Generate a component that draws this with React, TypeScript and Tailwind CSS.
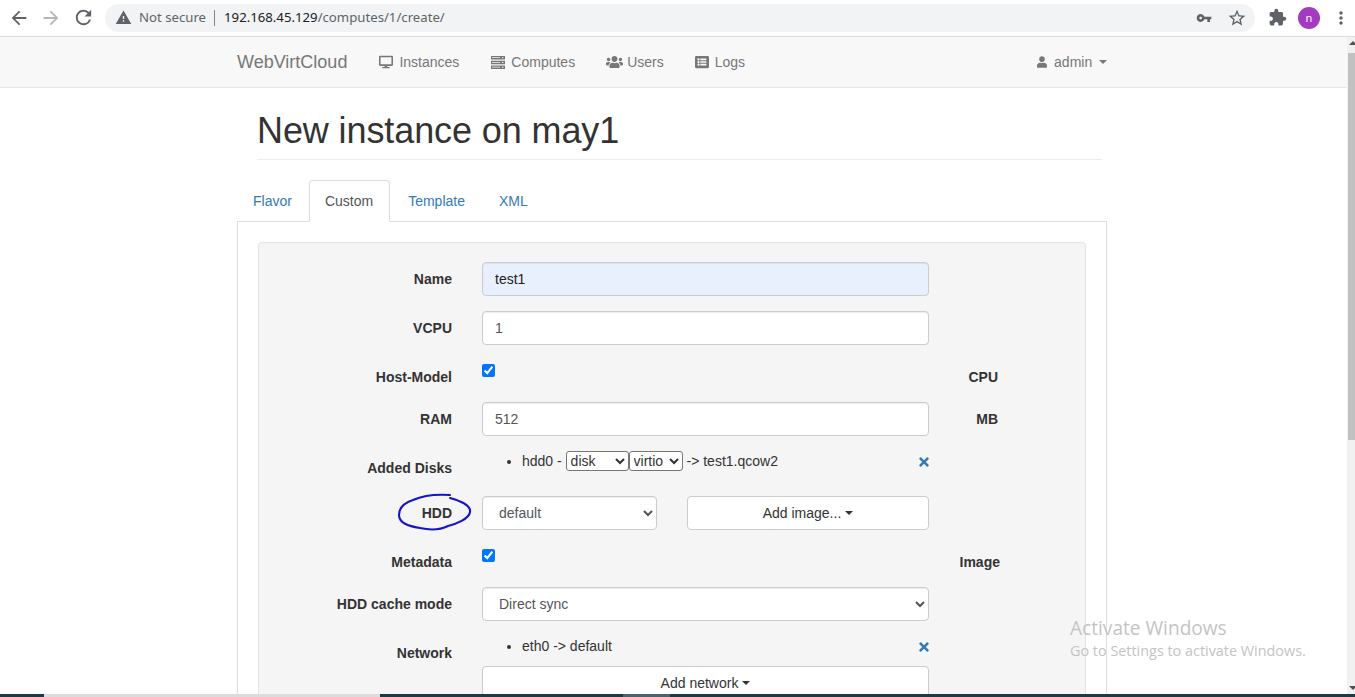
import React from "react";
import { MdArrowBack, MdArrowForward, MdRefresh, MdWarning, MdVpnKey, MdStarBorder, MdExtension, MdMoreVert } from "react-icons/md";
import { FaDesktop, FaUsers, FaUser, FaListAlt, FaTimes } from "react-icons/fa";

const Caret = ({ className = "" }: { className?: string }) => (
  <span className={`inline-block w-0 h-0 border-x-[4px] border-x-transparent border-t-[4px] border-t-current align-middle ${className}`} />
);

const Row = ({ label, unit, unitCls = "w-[69px]", children, className = "mb-[15px]" }: { label: string; unit?: string; unitCls?: string; children: React.ReactNode; className?: string }) => (
  <div className={`flex ${className}`}>
    <label className="w-[193px] shrink-0 pt-[7px] text-right font-bold text-[#333] leading-5">{label}</label>
    <div className="ml-[30px] w-[447px] shrink-0">{children}</div>
    {unit && <label className={`${unitCls} shrink-0 pt-[7px] text-right font-bold text-[#333] leading-5`}>{unit}</label>}
  </div>
);

const inputCls = "block w-full h-[34px] rounded border border-[#ccc] px-3 text-sm text-[#555] shadow-[inset_0_1px_1px_rgba(0,0,0,0.075)] outline-none";
const selectCls = "block h-[34px] rounded border border-[#ccc] bg-white px-3 text-sm text-[#555] shadow-[inset_0_1px_1px_rgba(0,0,0,0.075)]";
const btnCls = "flex items-center justify-center h-[34px] rounded border border-[#ccc] bg-white text-sm text-[#333]";

const Check = () => (
  <input type="checkbox" defaultChecked className="block w-[13px] h-[13px] mt-1 m-0 accent-[#0075ff]" />
);

const ComputesIcon = () => (
  <svg className="w-[14px] h-[13px] mr-[6px]" viewBox="0 0 14 13" fill="#777">
    <path d="M0 0h14v3.4H0zM0 4.8h14v3.4H0zM0 9.6h14V13H0z" />
    <path d="M1 1.2h8v.8H1zM1 6h8v.8H1zM1 10.8h8v.8H1zM11 1.2h1.4v1H11zM11 6h1.4v1H11zM11 10.8h1.4v1H11z" fill="#f8f8f8" />
  </svg>
);

export default function App() {
  return (
    <div className="relative flex flex-col h-[697px] w-[1355px] overflow-hidden bg-white text-sm font-['Liberation_Sans',Arial,sans-serif]">
      {/* Browser toolbar */}
      <div className="flex items-center h-[37px] shrink-0 border-b border-[#dcdcdc] bg-white pb-px">
        <div className="flex items-center w-[105px] pl-[8px] text-[#5f6368]">
          <MdArrowBack className="w-[22px] h-[22px]" />
          <MdArrowForward className="ml-[10px] w-[22px] h-[22px] text-[#b4b6b9]" />
          <MdRefresh className="ml-[10px] w-[23px] h-[23px]" />
        </div>
        <div className="flex items-center w-[1150px] h-[28px] rounded-full bg-[#f1f3f4] pl-[10px] font-['Noto_Sans',sans-serif] text-[13.2px]">
          <MdWarning className="w-[17px] h-[17px] text-[#5f6368]" />
          <span className="ml-[7px] text-[#5f6368]">Not secure</span>
          <span className="ml-[8px] w-px h-[16px] bg-[#80868b]" />
          <span className="ml-[9px] text-[#202124]">192.168.45.129<span className="text-[#5f6368]">/computes/1/create/</span></span>
          <MdVpnKey className="ml-auto w-[16px] h-[16px] text-[#5f6368]" />
          <MdStarBorder className="ml-[15px] mr-[8px] w-[20px] h-[20px] text-[#5f6368]" />
        </div>
        <MdExtension className="ml-[13px] w-[19px] h-[19px] text-[#5f6368]" />
        <span className="ml-[11px] flex items-center justify-center w-[22px] h-[22px] rounded-full bg-[#a43ac0] text-white text-[11px] font-['Noto_Sans',sans-serif]">n</span>
        <MdMoreVert className="ml-[11px] w-[20px] h-[20px] text-[#5f6368]" />
      </div>

      <div className="flex flex-1 min-h-0">
        <div className="w-[1347px] shrink-0 overflow-hidden">
          {/* Navbar */}
          <nav className="flex items-center h-[51px] pl-[237px] bg-[#f8f8f8] border-b border-[#e7e7e7] text-[#777]">
            <span className="text-lg">WebVirtCloud</span>
            <span className="ml-[32px] flex items-center"><FaDesktop className="w-[14px] h-[14px] mr-[6px]" />Instances</span>
            <span className="ml-[32px] flex items-center"><ComputesIcon />Computes</span>
            <span className="ml-[31px] flex items-center"><FaUsers className="w-[17px] h-[14px] mr-[4px]" />Users</span>
            <span className="ml-[31px] flex items-center"><FaListAlt className="w-[14px] h-[14px] mr-[6px]" />Logs</span>
            <span className="ml-[292px] flex items-center"><FaUser className="w-[10px] h-[12px] mr-[7px]" />admin<Caret className="ml-[7px]" /></span>
          </nav>

          <div className="w-[870px] ml-[237px]">
            {/* Heading */}
            <div className="mt-[23px] ml-[20px] w-[845px] pb-[8px] border-b border-[#eee]">
              <h1 className="tracking-[-0.1px] text-[36px] leading-[40px] font-normal text-[#333]">New instance on may1</h1>
            </div>

            {/* Tabs */}
            <ul className="flex mt-[20px] border-b border-[#ddd] h-[42px]">
              <li className="mr-px px-[16px] py-[11px] leading-5 text-[#337ab7]">Flavor</li>
              <li className="mr-[2px] h-[42px] pl-[15px] pr-[16px] py-[10px] leading-5 text-[#555] bg-white border border-[#ddd] border-b-white rounded-t">Custom</li>
              <li className="mr-[2px] px-[16px] py-[11px] leading-5 text-[#337ab7]">Template</li>
              <li className="px-[16px] py-[11px] leading-5 text-[#337ab7]">XML</li>
            </ul>

            {/* Tab panel */}
            <div className="border-x border-[#ddd] pt-[20px] pl-[20px] pr-[20px] h-[600px]">
              <div className="w-[828px] rounded border border-[#e3e3e3] bg-[#f5f5f5] pt-[19px] h-[600px]">
                <Row label="Name">
                  <input className={`${inputCls} !bg-[#e8f0fe] !text-[#222]`} defaultValue="test1" />
                </Row>
                <Row label="VCPU">
                  <input className={`${inputCls} bg-white`} defaultValue="1" />
                </Row>
                <Row label="Host-Model" unit="CPU" className="mb-[15px] h-[27px]"><Check /></Row>
                <Row label="RAM" unit="MB">
                  <input className={`${inputCls} bg-white`} defaultValue="512" />
                </Row>
                <Row label="Added Disks">
                  <div className="flex h-[30px] text-[#333]">
                    <ul className="flex-1 list-disc pl-[40px]">
                      <li className="leading-5">
                        hdd0 -{" "}
                        <select className="w-[63px] h-[20px] align-top rounded-[3px] border border-[#767676] bg-white text-sm text-[#333]" defaultValue="disk">
                          <option>disk</option>
                          <option>cdrom</option>
                        </select>
                        <select className="w-[54px] h-[20px] align-top rounded-[3px] border border-[#767676] bg-white text-sm text-[#333]" defaultValue="virtio">
                          <option>virtio</option>
                          <option>ide</option>
                        </select>
                        {" "}-&gt; test1.qcow2
                      </li>
                    </ul>
                    <FaTimes className="mt-[4px] w-[10px] h-[14px] text-[#337ab7]" />
                  </div>
                </Row>
                <Row label="HDD">
                  <div className="flex justify-between">
                    <select className={`${selectCls} w-[175px]`} defaultValue="default">
                      <option>default</option>
                    </select>
                    <button className={`${btnCls} w-[242px]`}>Add image...<Caret className="ml-[4px]" /></button>
                  </div>
                </Row>
                <Row label="Metadata" unit="Image" unitCls="w-[71px]" className="mb-[15px] h-[27px]"><Check /></Row>
                <Row label="HDD cache mode">
                  <select className={`${selectCls} w-full`} defaultValue="Direct sync">
                    <option>Direct sync</option>
                  </select>
                </Row>
                <Row label="Network">
                  <div className="flex h-[30px] text-[#333]">
                    <ul className="flex-1 list-disc pl-[40px]"><li className="leading-5">eth0 -&gt; default</li></ul>
                    <FaTimes className="mt-[4px] w-[10px] h-[14px] text-[#337ab7]" />
                  </div>
                  <button className={`${btnCls} w-full`}>Add network<Caret className="ml-[4px]" /></button>
                </Row>
              </div>
            </div>
          </div>
        </div>

        {/* Scrollbar */}
        <div className="relative w-[8px] shrink-0 bg-[#f1f1f1]">
          <div className="absolute left-[2px] top-[4px] w-0 h-0 border-x-[4px] border-x-transparent border-b-[4px] border-b-[#505050]" />
          <div className="absolute left-px right-0 top-[16px] h-[387px] bg-[#c1c1c1]" />
          <div className="absolute left-[2px] bottom-[4px] w-0 h-0 border-x-[4px] border-x-transparent border-t-[4px] border-t-[#505050]" />
        </div>
      </div>

      {/* Taskbar sliver */}
      <div className="flex h-[3px] shrink-0 bg-[#1e3a46]">
        <div className="ml-[44px] w-[336px] bg-[#dcdcdc]" />
        <div className="ml-[243px] w-[47px] bg-[#4a626d]" />
      </div>

      {/* Hand-drawn annotation */}
      <svg className="absolute left-[396px] top-[492px] w-[78px] h-[42px]" viewBox="0 0 78 42" fill="none">
        <path d="M54 3 C40 2 26 4 17 8 C8 11 3 16 3 23 C3 31 12 34 24 36 C33 38 44 38 52 34 C60 32 73 27 74 20 C75 14 68 10 54 6" stroke="#1414c8" strokeWidth="2.1" strokeLinecap="round" />
      </svg>

      {/* Windows watermark */}
      <div className="absolute left-[1070px] top-[616px] font-['Open_Sans',sans-serif] text-[#c4c4c4] pointer-events-none">
        <div className="text-[19.1px] leading-[24px]">Activate Windows</div>
        <div className="text-[14.4px] leading-[22px]">Go to Settings to activate Windows.</div>
      </div>
    </div>
  );
}
